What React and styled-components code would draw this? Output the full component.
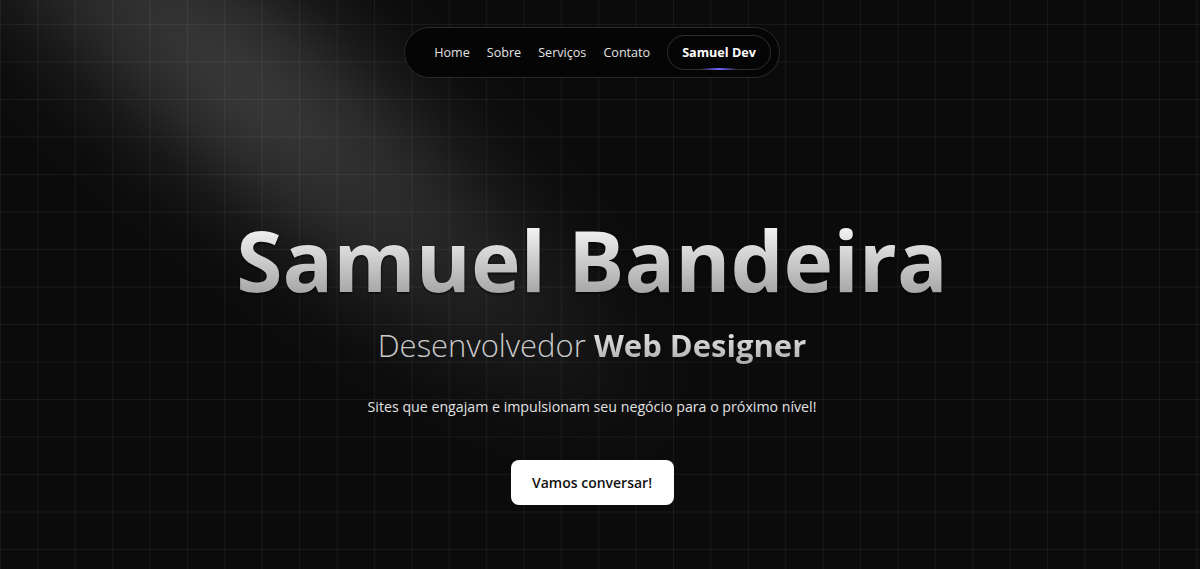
import React from 'react'
import styled, { createGlobalStyle } from 'styled-components'

const GlobalStyle = createGlobalStyle`
    * { box-sizing: border-box; }
    html, body {
        margin: 0;
        padding: 0;
        background: #0b0b0c;
        font-family: 'Open Sans', 'Noto Sans', sans-serif;
    }
`

const Root = styled.div`
    position: relative;
    overflow: hidden;
    width: 100%;
    height: 569px;
    padding-right: 16px;
    background-color: #0b0b0c;
    background-image:
        linear-gradient(to right, rgba(255, 255, 255, 0.055) 1px, transparent 1px),
        linear-gradient(to bottom, rgba(255, 255, 255, 0.055) 1px, transparent 1px);
    background-size: 37.4px 37.5px;
    background-position: 0 24px;
    display: flex;
    flex-direction: column;
    align-items: center;
`

const Spotlight = styled.div`
    position: absolute;
    left: -140px;
    top: 0;
    width: 900px;
    height: 280px;
    transform: rotate(40deg);
    transform-origin: center;
    background: radial-gradient(ellipse at 40% 50%, rgba(255, 255, 255, 0.22), rgba(255, 255, 255, 0.1) 40%, rgba(255, 255, 255, 0.03) 60%, transparent 72%);
    filter: blur(34px);
    pointer-events: none;
`

const Nav = styled.nav`
    position: relative;
    margin-top: 27px;
    display: flex;
    align-items: center;
    gap: 17px;
    height: 51px;
    padding: 0 8px 0 29px;
    background: #050505;
    border: 1px solid #2a2a2c;
    border-radius: 26px;
`

const NavLink = styled.a`
    color: #e2e2e2;
    font-size: 12.6px;
    text-decoration: none;
`

const Brand = styled.a`
    position: relative;
    display: flex;
    align-items: center;
    height: 35px;
    padding: 0 14px;
    border: 1px solid #2e2e30;
    border-radius: 18px;
    color: #ffffff;
    font-size: 12.6px;
    font-weight: 700;
    text-decoration: none;

    &::after {
        content: '';
        position: absolute;
        left: 50%;
        bottom: -1px;
        width: 36px;
        height: 2px;
        transform: translateX(-50%);
        background: linear-gradient(to right, transparent, #6f63ff, transparent);
        border-radius: 2px;
    }
`

const Hero = styled.main`
    position: relative;
    display: flex;
    flex-direction: column;
    align-items: center;
    margin-top: 140px;
`

const Title = styled.h1`
    margin: 0;
    font-size: 84px;
    font-weight: 700;
    line-height: 1;
    letter-spacing: 0;
    background: linear-gradient(to bottom, #f4f4f4 10%, #9c9c9c 100%);
    -webkit-background-clip: text;
    background-clip: text;
    color: transparent;
    filter: drop-shadow(0 1px 1px rgba(0, 0, 0, 0.9));
`

const Subtitle = styled.h2`
    margin: 28px 0 0;
    font-size: 31px;
    font-weight: 300;
    line-height: 1;
    color: #c9c9c9;
`

const Strong = styled.span`
    font-weight: 700;
    background: linear-gradient(to bottom, #f2f2f2, #a8a8a8);
    -webkit-background-clip: text;
    background-clip: text;
    color: transparent;
`

const Tagline = styled.p`
    margin: 36px 0 0;
    font-size: 14.2px;
    color: #e2e2e2;
`

const Cta = styled.button`
    margin-top: 44px;
    width: 163px;
    height: 45px;
    border: none;
    border-radius: 8px;
    background: #ffffff;
    color: #111111;
    font-family: inherit;
    font-size: 14px;
    font-weight: 600;
    cursor: pointer;
`

export default function App() {
    return (
        <Root>
            <GlobalStyle />
            <Spotlight />
            <Nav>
                <NavLink href="#">Home</NavLink>
                <NavLink href="#">Sobre</NavLink>
                <NavLink href="#">Serviços</NavLink>
                <NavLink href="#">Contato</NavLink>
                <Brand href="#">Samuel Dev</Brand>
            </Nav>
            <Hero>
                <Title>Samuel Bandeira</Title>
                <Subtitle>
                    Desenvolvedor <Strong>Web Designer</Strong>
                </Subtitle>
                <Tagline>Sites que engajam e impulsionam seu negócio para o próximo nível!</Tagline>
                <Cta>Vamos conversar!</Cta>
            </Hero>
        </Root>
    )
}
